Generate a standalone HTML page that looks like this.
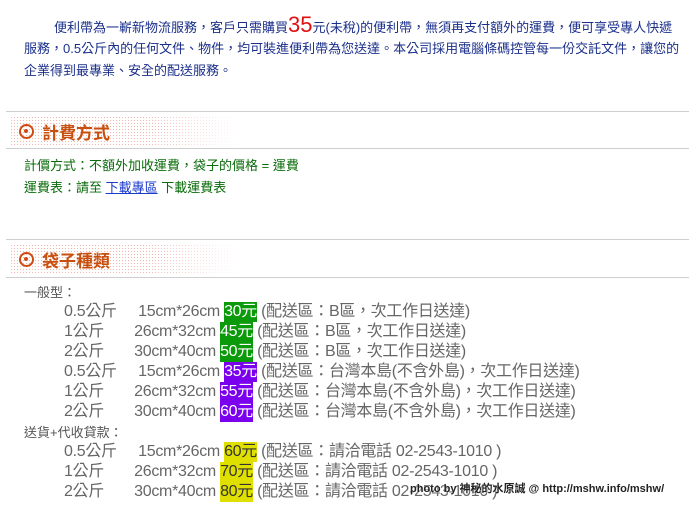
<!DOCTYPE html>
<html><head><meta charset="utf-8"><style>
*{margin:0;padding:0;box-sizing:border-box}
body{width:689px;height:506px;background:#fff;position:relative;overflow:hidden;font-family:"Liberation Sans","Noto Sans CJK TC",sans-serif}
.a{position:absolute;white-space:nowrap}
.p{color:#1b2f8a;font-size:13px;left:24px}
.hl{position:absolute;left:6px;right:0;height:1px;background:#cfcfcf}
.band{position:absolute;left:10px;width:230px;height:29px;background-image:radial-gradient(circle,#f2b8b0 0.6px,transparent 0.8px);background-size:3px 3px;-webkit-mask-image:linear-gradient(90deg,#000 60%,transparent);mask-image:linear-gradient(90deg,#000 60%,transparent)}
.ic{position:absolute;left:19px;width:15px;height:15px;border:2.5px solid #d04a10;border-radius:50%}
.ic:after{content:"";position:absolute;left:3px;top:3px;width:4px;height:4px;border-radius:50%;background:#d04a10}
.h{position:absolute;left:42px;font-size:17px;font-weight:bold;color:#c8500f}
.g{color:#0b6b0b;font-size:13px;left:24px}
.s{color:#555;font-size:13px;left:24px}
.r{color:#666;font-size:16px;left:64px;letter-spacing:-0.3px;line-height:20px}
.r span{display:inline-block;line-height:20px}
.w{width:70px}
.w2{width:66px}
.gb{background:#0a9a0a;color:#fff}
.pb{background:#7a00ee;color:#fff}
.yb{background:#e0e000;color:#333}
</style></head><body>
<div class="a p" style="top:17px;left:54px">便利帶為一嶄新物流服務，客戶只需購買<span style="color:#e01010;font-size:22px;line-height:13px">35</span>元(未稅)的便利帶，無須再支付額外的運費，便可享受專人快遞</div>
<div class="a p" style="top:38px">服務，0.5公斤內的任何文件、物件，均可裝進便利帶為您送達。本公司採用電腦條碼控管每一份交託文件，讓您的</div>
<div class="a p" style="top:60px">企業得到最專業、安全的配送服務。</div>

<div class="hl" style="top:111px"></div>
<div class="band" style="top:116px"></div>
<div class="ic" style="top:124px"></div>
<div class="h" style="top:119px">計費方式</div>
<div class="hl" style="top:148px"></div>
<div class="a g" style="top:155px">計價方式：不額外加收運費，袋子的價格 = 運費</div>
<div class="a g" style="top:177px">運費表：請至 <a style="color:#1a3acc;text-decoration:underline">下載專區</a> 下載運費表</div>

<div class="hl" style="top:239px"></div>
<div class="band" style="top:244px"></div>
<div class="ic" style="top:252px"></div>
<div class="h" style="top:247px">袋子種類</div>
<div class="hl" style="top:277px"></div>

<div class="a s" style="top:282px">一般型：</div>
<div class="a r" style="top:302px"><span class="w">0.5公斤</span> 15cm*26cm <span class="gb">30元</span> (配送區：B區，次工作日送達)</div>
<div class="a r" style="top:322px"><span class="w2">1公斤</span> 26cm*32cm <span class="gb">45元</span> (配送區：B區，次工作日送達)</div>
<div class="a r" style="top:342px"><span class="w2">2公斤</span> 30cm*40cm <span class="gb">50元</span> (配送區：B區，次工作日送達)</div>
<div class="a r" style="top:362px"><span class="w">0.5公斤</span> 15cm*26cm <span class="pb">35元</span> (配送區：台灣本島(不含外島)，次工作日送達)</div>
<div class="a r" style="top:382px"><span class="w2">1公斤</span> 26cm*32cm <span class="pb">55元</span> (配送區：台灣本島(不含外島)，次工作日送達)</div>
<div class="a r" style="top:402px"><span class="w2">2公斤</span> 30cm*40cm <span class="pb">60元</span> (配送區：台灣本島(不含外島)，次工作日送達)</div>
<div class="a s" style="top:422px">送貨+代收貸款：</div>
<div class="a r" style="top:442px"><span class="w">0.5公斤</span> 15cm*26cm <span class="yb">60元</span> (配送區：請洽電話 02-2543-1010 )</div>
<div class="a r" style="top:462px"><span class="w2">1公斤</span> 26cm*32cm <span class="yb">70元</span> (配送區：請洽電話 02-2543-1010 )</div>
<div class="a r" style="top:482px"><span class="w2">2公斤</span> 30cm*40cm <span class="yb">80元</span> (配送區：請洽電話 02-2543-1010 )</div>
<div class="a" style="top:480px;left:410px;font-size:11px;font-weight:bold;color:#222;text-shadow:0 0 2px #fff">photo by 神秘的水原誠 @ http://mshw.info/mshw/</div>
</body></html>
